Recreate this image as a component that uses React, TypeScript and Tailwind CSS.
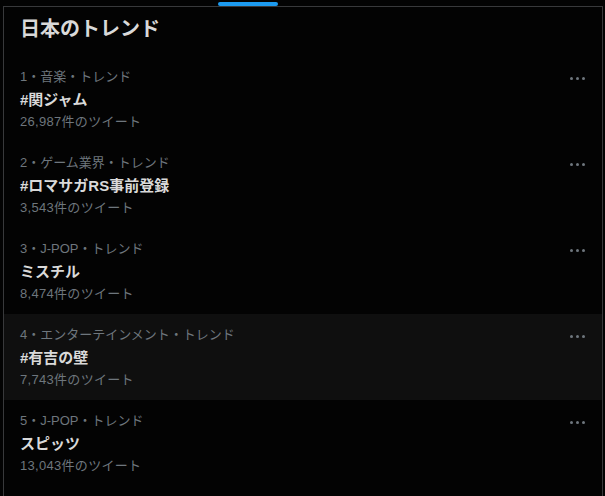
const trends = [
  { meta: "1・音楽・トレンド", name: "#関ジャム", count: "26,987件のツイート" },
  { meta: "2・ゲーム業界・トレンド", name: "#ロマサガRS事前登録", count: "3,543件のツイート" },
  { meta: "3・J-POP・トレンド", name: "ミスチル", count: "8,474件のツイート" },
  { meta: "4・エンターテインメント・トレンド", name: "#有吉の壁", count: "7,743件のツイート", hover: true },
  { meta: "5・J-POP・トレンド", name: "スピッツ", count: "13,043件のツイート" },
];

function MoreDots() {
  return (
    <div className="mt-[10px] flex h-[3px] items-center gap-[3px]">
      <span className="h-[3px] w-[3px] rounded-full bg-[#6e767d]" />
      <span className="h-[3px] w-[3px] rounded-full bg-[#6e767d]" />
      <span className="h-[3px] w-[3px] rounded-full bg-[#6e767d]" />
    </div>
  );
}

export default function App() {
  return (
    <div
      className="h-[496px] w-[605px] overflow-hidden bg-[#030303]"
      style={{ fontFamily: '"Liberation Sans", "Noto Sans CJK JP", sans-serif' }}
    >
      {/* tab indicator */}
      <div className="flex h-[6px] items-start pl-[218px] pt-[2px]">
        <div className="h-[4px] w-[60px] rounded-full bg-[#1d9bf0]" />
      </div>

      <section className="ml-[3px] h-[490px] w-[600px] border-l border-r border-t border-[#38393b]">
        <h2 className="h-[49px] px-[16px] pt-[10px] text-[20px] font-bold leading-[24px] text-[#d9d9d9]">
          日本のトレンド
        </h2>

        {trends.map((t) => (
          <div
            key={t.name}
            className={
              t.hover
                ? "flex h-[86px] justify-between bg-[#0f0f0f] pl-[16px] pr-[17px] pt-[11px]"
                : "flex h-[86px] justify-between pl-[16px] pr-[17px] pt-[11px]"
            }
          >
            <div className="flex flex-col">
              <span className="text-[13px] leading-[20px] text-[#6e767d]">{t.meta}</span>
              <span className="mt-[1px] text-[15px] font-bold leading-[24px] text-[#d9d9d9]">
                {t.name}
              </span>
              <span className="text-[13px] leading-[20px] tracking-[0.3px] text-[#6e767d]">
                {t.count}
              </span>
            </div>
            <MoreDots />
          </div>
        ))}
      </section>
    </div>
  );
}
